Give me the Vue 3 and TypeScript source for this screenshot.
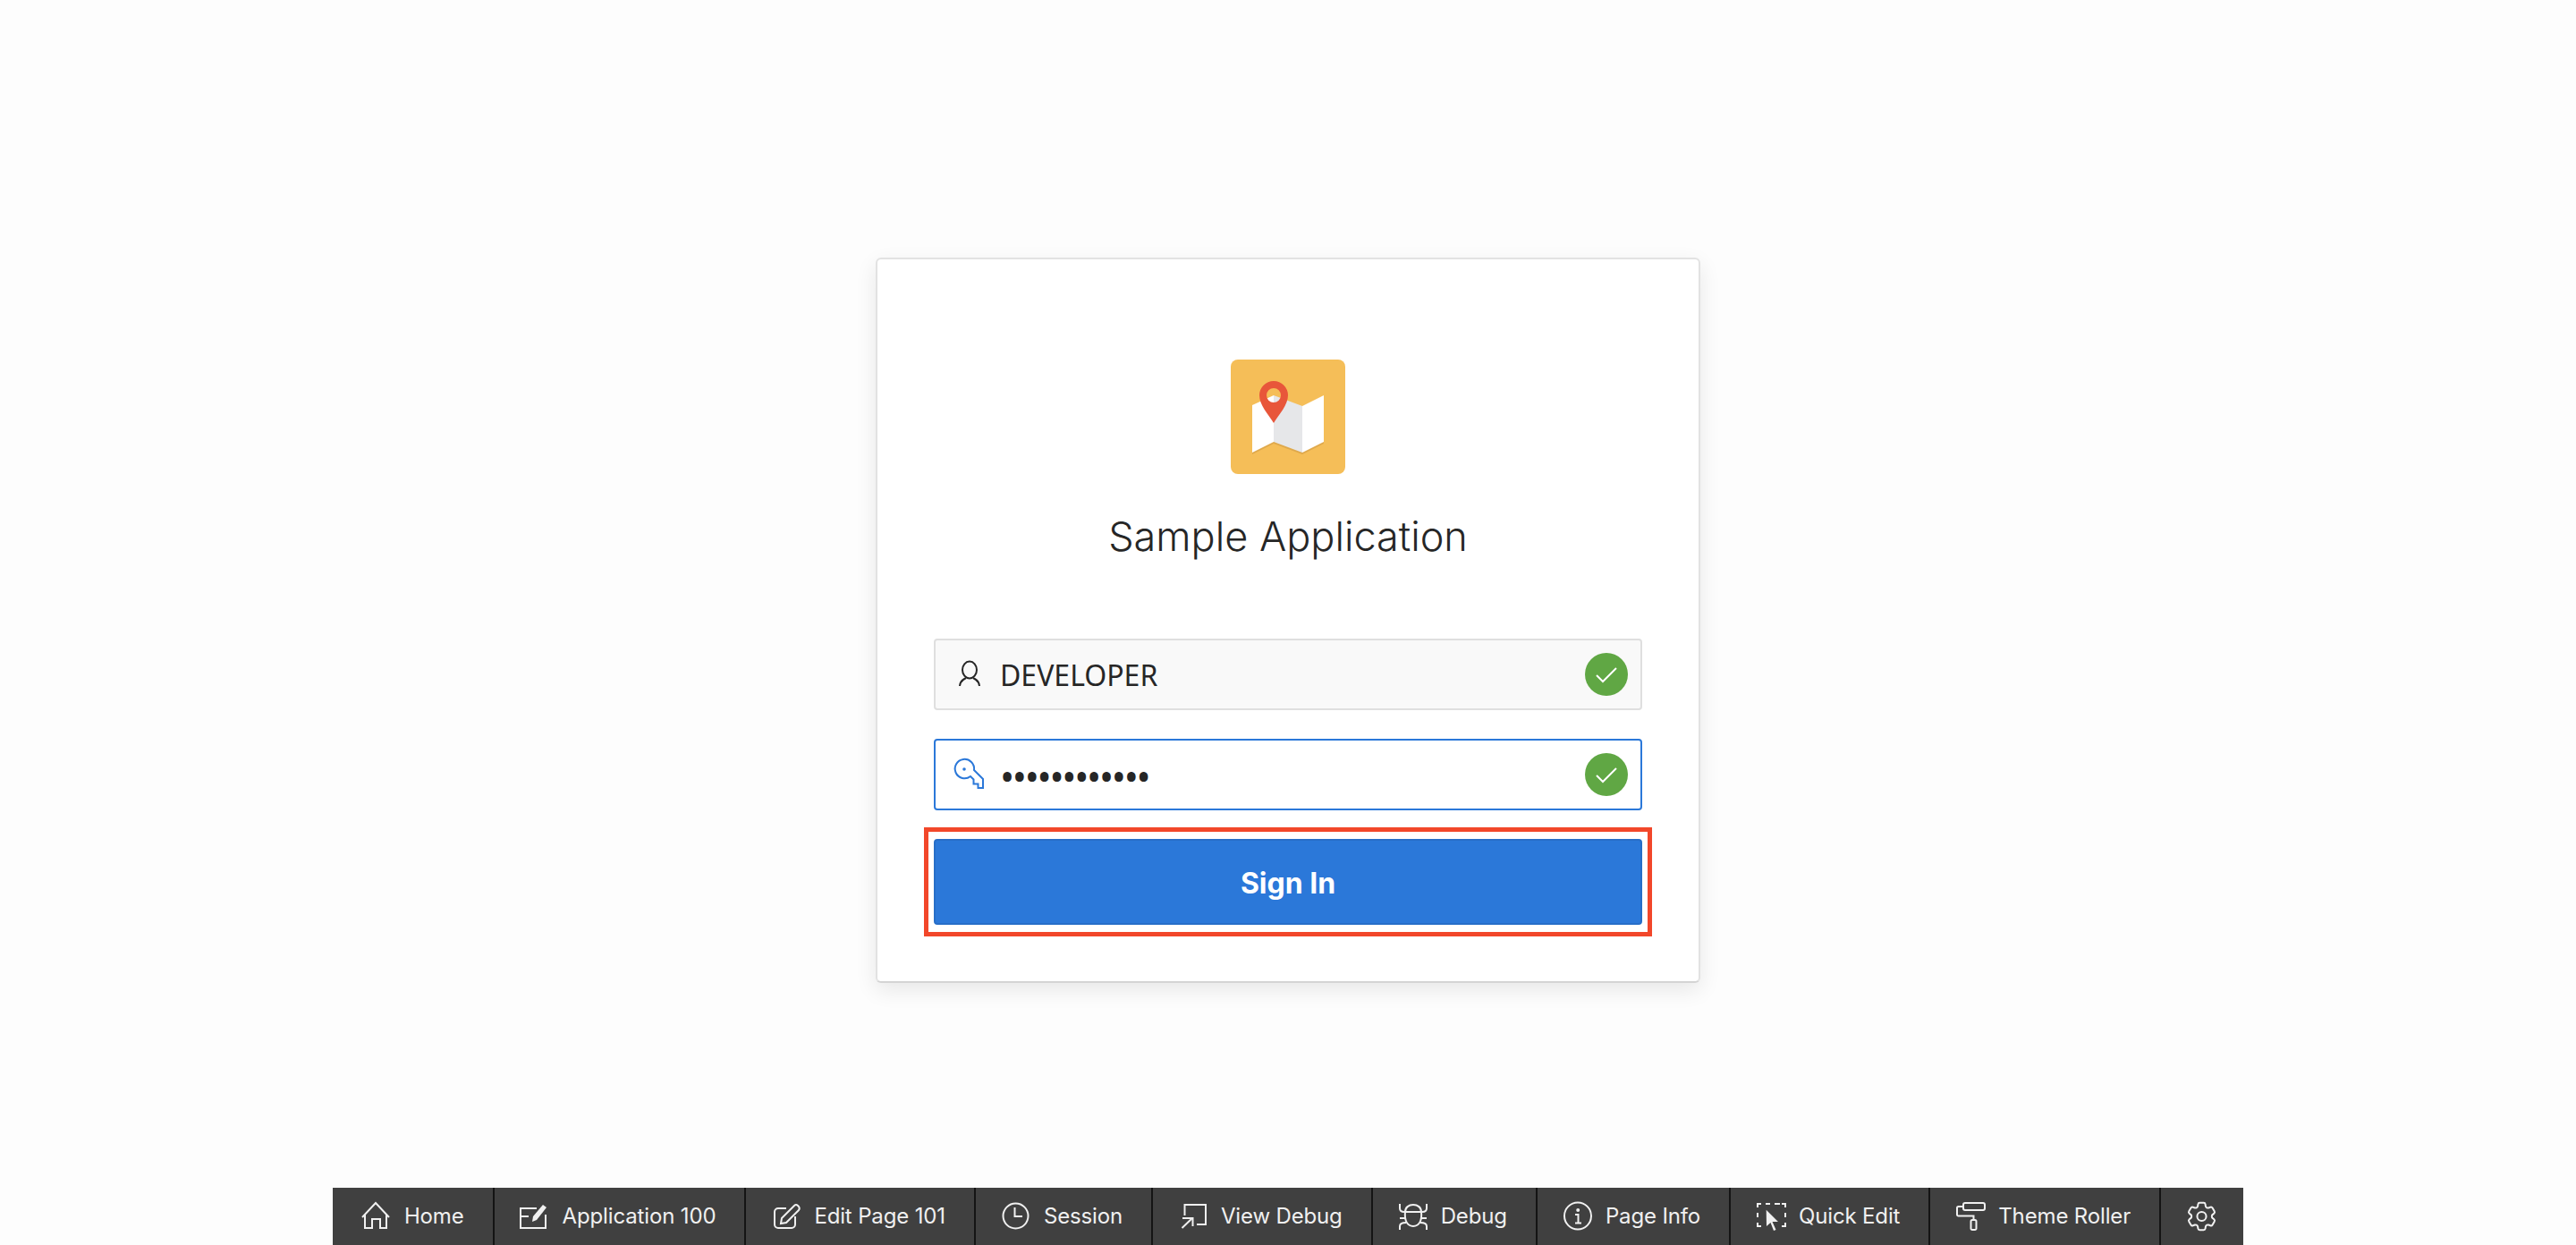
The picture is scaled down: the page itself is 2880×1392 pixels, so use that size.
<script setup lang="ts">
interface ToolItem {
  label: string;
  strokes: string[];
  fills?: string[];
}

const toolItems: ToolItem[] = [
  {
    label: 'Home',
    strokes: ['M1 17 16 1 31 17', 'M4 14V29H12V19H21V29H28V14'],
  },
  {
    label: 'Application 100',
    strokes: ['M19 7H1V29H29V14', 'M1 16H10'],
    fills: ['M14 22 15 16 26 3 30 6 19 20Z'],
  },
  {
    label: 'Edit Page 101',
    strokes: [
      'M17 7H8A4 4 0 0 0 4 11V25A4 4 0 0 0 8 29H23A4 4 0 0 0 27 25V16',
      'M11 24 12 18 26 4Q28 2 30 4L31 5Q32.5 7 31 9L17 23Z',
    ],
  },
  {
    label: 'Session',
    strokes: ['M30.5 15.5A14 14 0 1 1 2.5 15.5 14 14 0 1 1 30.5 15.5Z', 'M15.5 6V16H24'],
  },
  {
    label: 'View Debug',
    strokes: ['M7.5 15V3H31V25H21', 'M4.5 29 16 18', 'M5 18H16.5V27'],
  },
  {
    label: 'Debug',
    strokes: [
      'M8 11C8 6 12 3 17 3 22 3 26 6 26 11',
      'M7 11H27',
      'M8 11C7 20 10 27 17 27 24 27 27 20 26 11',
      'M2 2V7Q2 11 7 11',
      'M32 2V7Q32 11 27 11',
      'M2 18H9',
      'M25 18H32',
      'M2 31V27Q2 23 9 23',
      'M32 31V27Q32 23 25 23',
    ],
  },
  {
    label: 'Page Info',
    strokes: ['M32 15.5A15 15 0 1 1 2 15.5 15 15 0 1 1 32 15.5Z', 'M14 14H17.5V23', 'M14 23.5H21'],
    fills: ['M15.2 9A2 2 0 1 1 19.2 9 2 2 0 1 1 15.2 9Z'],
  },
  {
    label: 'Quick Edit',
    strokes: [
      'M2 6V2H6', 'M11 2H16', 'M21 2H27', 'M29 2H33V6',
      'M2 12V17', 'M33 12V17', 'M2 23V27H6', 'M29 27H33V23',
    ],
    fills: ['M11.7 8.7 25 22H18.5L22.5 31 20 32 16.5 23 12 27Z'],
  },
  {
    label: 'Theme Roller',
    strokes: [
      'M11 1H31A2 2 0 0 1 33 3V7A2 2 0 0 1 31 9H11A2 2 0 0 1 9 7V3A2 2 0 0 1 11 1Z',
      'M9 5H3.5A1.5 1.5 0 0 0 2 6.5V14A1.5 1.5 0 0 0 3.5 15.5H20.5V20',
      'M19 20H22A1.5 1.5 0 0 1 23.5 21.5V29.5A1.5 1.5 0 0 1 22 31H19A1.5 1.5 0 0 1 17.5 29.5V21.5A1.5 1.5 0 0 1 19 20Z',
    ],
  },
];

const gearPath =
  'M9.594 3.94c.09-.542.56-.94 1.11-.94h2.593c.55 0 1.02.398 1.11.94l.213 1.281c.063.374.313.686.645.87.074.04.147.083.22.127.324.196.72.257 1.075.124l1.217-.456a1.125 1.125 0 011.37.49l1.296 2.247a1.125 1.125 0 01-.26 1.431l-1.003.827c-.293.24-.438.613-.431.992a6.759 6.759 0 010 .255c-.007.378.138.75.43.99l1.005.828c.424.35.534.954.26 1.43l-1.298 2.247a1.125 1.125 0 01-1.369.491l-1.217-.456c-.355-.133-.75-.072-1.076.124a6.57 6.57 0 01-.22.128c-.331.183-.581.495-.644.869l-.213 1.28c-.09.543-.56.941-1.11.941h-2.594c-.55 0-1.02-.398-1.11-.94l-.213-1.281c-.062-.374-.312-.686-.644-.87a6.52 6.52 0 01-.22-.127c-.325-.196-.72-.257-1.076-.124l-1.217.456a1.125 1.125 0 01-1.369-.49l-1.297-2.247a1.125 1.125 0 01.26-1.431l1.004-.827c.292-.24.437-.613.43-.992a6.932 6.932 0 010-.255c.007-.378-.138-.75-.43-.99l-1.004-.828a1.125 1.125 0 01-.26-1.43l1.297-2.247a1.125 1.125 0 011.37-.491l1.216.456c.356.133.751.072 1.076-.124.072-.044.146-.087.22-.128.332-.183.582-.495.644-.869l.214-1.281z';

const bullets = '•'.repeat(12);
</script>

<template>
  <div class="page">
    <main class="main">
      <section class="card">
        <div class="logo">
          <svg width="128" height="128" viewBox="0 0 128 128">
            <path d="M24 53 48 42 80 54 104 42V94L80 106 48 94 24 106Z" fill="#dfa94c" />
            <path d="M24 51 48 40V92L24 104Z" fill="#fff" />
            <path d="M48 40 80 52V104L48 92Z" fill="#e6e7e9" />
            <path d="M80 52 104 40V92L80 104Z" fill="#fff" />
            <path
              fill-rule="evenodd"
              d="M48 24A16 16 0 0 1 64 40C64 51 54 61 48 71 42 61 32 51 32 40A16 16 0 0 1 48 24ZM48 32A8 8 0 1 0 48 48 8 8 0 1 0 48 32Z"
              fill="#e8563a"
            />
          </svg>
        </div>
        <h1 class="title">Sample Application</h1>

        <div class="field">
          <svg class="field-icon" width="32" height="32" viewBox="0 0 32 32" fill="none" stroke="#262626" stroke-width="2">
            <ellipse cx="16" cy="11" rx="8" ry="9.5" />
            <path d="M5 29C5 25 8 22 12 20M27 29C27 25 24 22 20 20" />
          </svg>
          <span class="field-text">DEVELOPER</span>
          <svg class="check" width="48" height="48" viewBox="0 0 48 48">
            <circle cx="24" cy="24" r="24" fill="#60a744" />
            <path d="M13 25 20 32 35 17" fill="none" stroke="#fff" stroke-width="2" />
          </svg>
        </div>

        <div class="field field-focus">
          <svg class="field-icon" width="32" height="32" viewBox="0 0 32 32" fill="none" stroke="#2b78d9" stroke-width="2">
            <path d="M21 11 31 21V31H25.5V26.5H20.5V21.5L17 18A10.7 10.7 0 1 1 21 11Z" />
            <circle cx="10" cy="10" r="1.8" fill="#2b78d9" stroke="none" />
          </svg>
          <span class="field-text dots">{{ bullets }}</span>
          <svg class="check" width="48" height="48" viewBox="0 0 48 48">
            <circle cx="24" cy="24" r="24" fill="#60a744" />
            <path d="M13 25 20 32 35 17" fill="none" stroke="#fff" stroke-width="2" />
          </svg>
        </div>

        <div class="signin-wrap">
          <button class="signin" type="button">Sign In</button>
          <div class="highlight"></div>
        </div>
      </section>
    </main>

    <nav class="toolbar">
      <a v-for="item in toolItems" :key="item.label" class="tool">
        <svg width="32" height="32" viewBox="0 0 32 32" fill="none" stroke="#f0f0f0" stroke-width="2" class="tool-icon">
          <path v-for="d in item.strokes" :key="d" :d="d" />
          <path v-for="d in item.fills" :key="d" :d="d" fill="#f0f0f0" stroke="none" />
        </svg>
        <span>{{ item.label }}</span>
      </a>
      <a class="tool tool-last">
        <svg width="32" height="32" viewBox="1.6 2.5 19 19" fill="none" stroke="#f0f0f0" stroke-width="1.2" class="tool-icon">
          <path :d="gearPath" />
          <circle cx="12" cy="12" r="3" />
        </svg>
      </a>
    </nav>
  </div>
</template>

<style scoped>
.page {
  height: 100vh;
  display: flex;
  flex-direction: column;
  align-items: center;
  overflow: hidden;
}

.main {
  flex: 1;
  padding-top: 288px;
}

.card {
  width: 922px;
  box-sizing: border-box;
  height: 811px;
  padding: 112px 63px 0;
  background: #fff;
  border: 2px solid #e2e2e2;
  border-bottom-color: #d4d4d4;
  border-radius: 6px;
  box-shadow: 0 8px 24px rgba(0, 0, 0, 0.09);
}

.logo {
  width: 128px;
  height: 128px;
  margin: 0 auto;
  background: #f5be58;
  border-radius: 8px;
}

.logo svg {
  display: block;
}

.title {
  margin: 40px 0 84px;
  font: 350 45px/60px Inter, sans-serif;
  color: #262626;
  text-align: center;
}

.field {
  height: 80px;
  box-sizing: border-box;
  margin-bottom: 32px;
  padding: 0 14px 0 22px;
  display: flex;
  align-items: center;
  background: #f9f9f9;
  border: 2px solid #dfdfdf;
  border-radius: 4px;
}

.field-focus {
  background: #fff;
  border-color: #2b78d9;
}

.field-icon {
  flex: none;
  overflow: visible;
}

.field-text {
  margin-left: 18px;
  padding-top: 1px;
  font: 400 32px/40px "Noto Sans", sans-serif;
  color: #262626;
}

.dots {
  font-size: 43px;
  letter-spacing: -2.3px;
  padding-top: 6px;
}

.check {
  margin-left: auto;
  flex: none;
}

.signin-wrap {
  position: relative;
}

.signin {
  display: block;
  width: 100%;
  height: 96px;
  padding-top: 4px;
  background: #2b78d9;
  border: 2px solid #276ec8;
  border-radius: 4px;
  color: #fff;
  font: 650 32px/40px Inter, sans-serif;
}

.highlight {
  position: absolute;
  inset: -13px -11px;
  border: 5px solid #f2472a;
  pointer-events: none;
}

.toolbar {
  display: flex;
  height: 64px;
  padding-left: 4px;
  background: #404040;
  flex: none;
}

.tool {
  display: flex;
  align-items: center;
  gap: 16px;
  padding: 0 32px 0 28px;
  border-right: 2px solid #141414;
  color: #f0f0f0;
  font: 400 24px/32px Inter, sans-serif;
  letter-spacing: -0.15px;
  white-space: nowrap;
}

.tool-last {
  padding-right: 32px;
  border-right: 0;
}

.tool-icon {
  flex: none;
  overflow: visible;
}
</style>

<style>
body {
  background: #fdfdfd;
}
</style>
